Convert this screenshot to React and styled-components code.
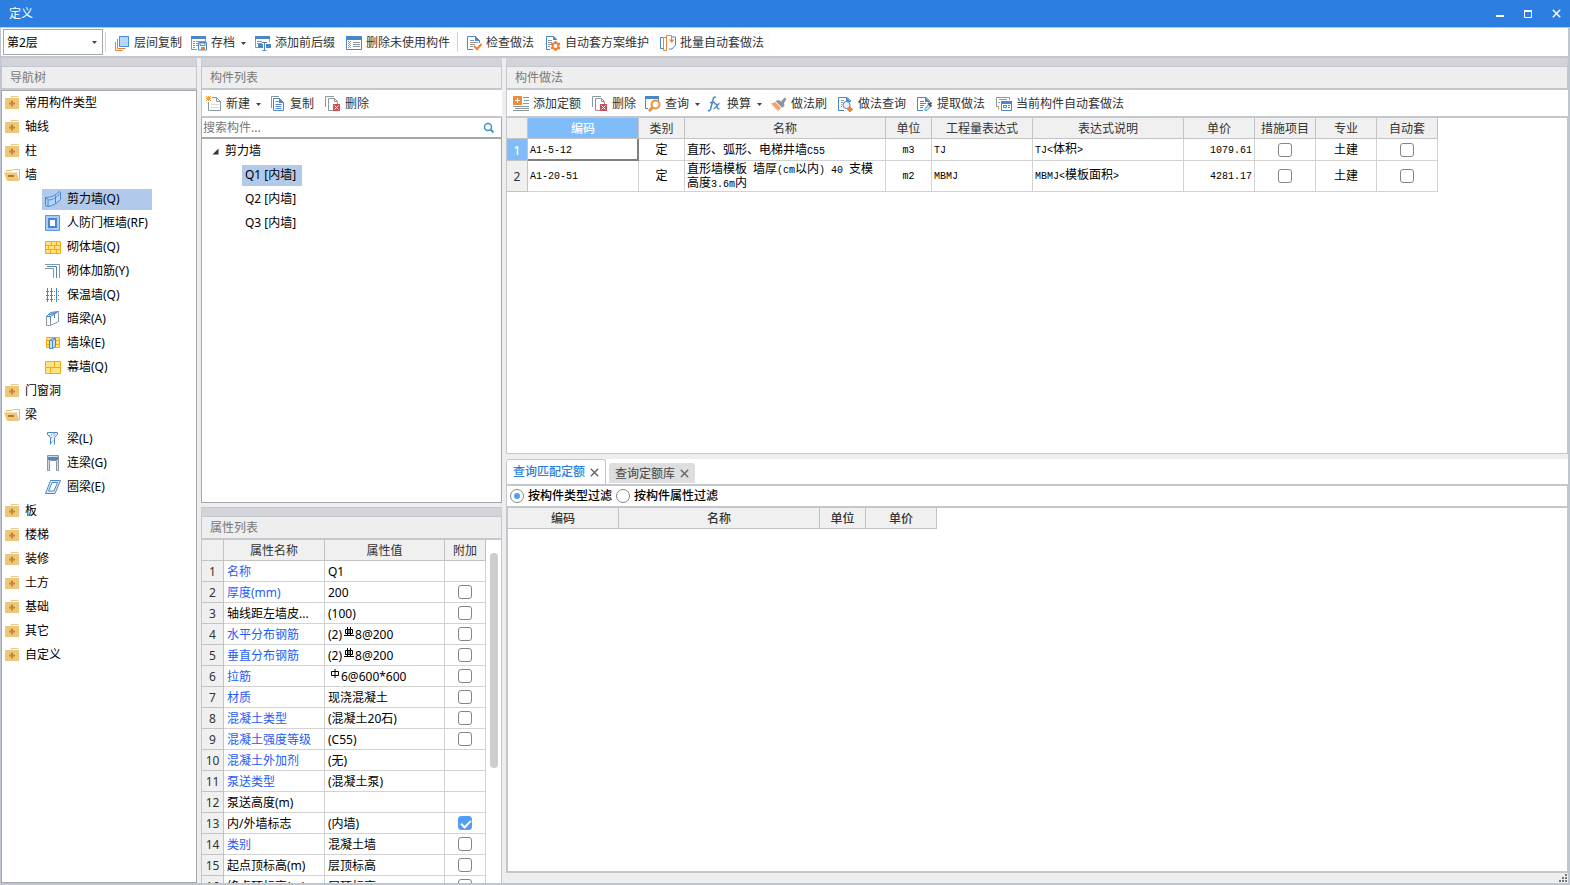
import React from "react";
import styled, { createGlobalStyle, css } from "styled-components";

const color = {
  title: "#2c7ee1",
  frame: "#c0c6d0",
  line: "#c4c8ce",
  strip: "#d3d4da",
  panel: "#eeeeee",
  grid: "#d3d3d3",
  gridHead: "#c3c3c3",
  box: "#a5a8ab",
  pick: "#b1caec",
  blue: "#4a86c8",
  orange: "#f08030",
  slate: "#8a979f",
};

const GlobalStyle = createGlobalStyle`
  * { box-sizing: border-box; }
  body {
    margin: 0;
    background: ${color.panel};
    color: #000;
    font: 12px/16px "Noto Sans", "Noto Sans CJK SC", sans-serif;
  }
  button, input, select { font: inherit; color: inherit; margin: 0; padding: 0; }
  button { background: none; border: 0; cursor: default; white-space: nowrap; }
  svg { display: block; flex: none; }
  ul { list-style: none; margin: 0; padding: 0; }
`;

/* ---------- window frame ---------- */

const Window = styled.div`
  display: flex;
  flex-direction: column;
  height: 100vh;
  overflow: hidden;
`;

const TitleBar = styled.header`
  display: flex;
  align-items: center;
  justify-content: space-between;
  height: 28px;
  padding: 0 5px 0 9px;
  border-bottom: 1px solid #b4cbe8;
  background: ${color.title};
  color: #fff;
`;

const Title = styled.h1`
  margin: 0;
  font-size: 12px;
  font-weight: 400;
`;

const WindowControls = styled.div`
  display: flex;
  gap: 10px;
`;

const WindowButton = styled.button`
  display: grid;
  place-items: center;
  width: 18px;
  height: 18px;
`;

const Frame = styled.div`
  flex: 1;
  min-height: 0;
  display: flex;
  flex-direction: column;
  border: solid ${color.frame};
  border-width: 0 2px 2px 1px;
`;

const MainToolbar = styled.div`
  display: flex;
  align-items: center;
  gap: 2px;
  height: 30px;
  padding: 0 2px;
  border-bottom: 2px solid ${color.line};
  background: #fff;
`;

const Separator = styled.span`
  width: 1px;
  height: 20px;
  margin-right: 2px;
  background: #d0d0d0;
`;

const FloorBox = styled.div`
  display: flex;
  align-items: center;
  position: relative;
  width: 100px;
  height: 26px;
  border: 1px solid ${color.box};

  > svg {
    position: absolute;
    right: 5px;
    pointer-events: none;
  }
`;

const FloorSelect = styled.select`
  width: 100%;
  height: 100%;
  padding: 2px 3px 0;
  border: 0;
  background: #fff;
  appearance: none;
`;

const ToolButton = styled.button`
  display: flex;
  align-items: center;
  gap: 4px;
  height: 21px;
  padding: 1px 4px 0 3px;
  border: 1px solid #fafafa;
  border-radius: 3px;
  color: #333;

  ${(p) =>
    p.$menu &&
    css`
      padding: 1px 2px 0 1px;
      border-color: transparent;
    `}
`;

const ToolText = styled.span`
  padding-top: 1px;
`;

const MenuMark = styled.span`
  padding: 1px 0 0 2px;
`;

const Workspace = styled.div`
  flex: 1;
  min-height: 0;
  display: flex;
  gap: 4px;
`;

const Column = styled.div`
  flex: ${(p) => (p.$width ? `0 0 ${p.$width}px` : "1 1 0")};
  min-width: 0;
  display: flex;
  flex-direction: column;
`;

const Panel = styled.section`
  flex: ${(p) => (p.$height ? `0 1 ${p.$height}px` : "1 1 0")};
  min-height: 0;
  display: flex;
  flex-direction: column;
  margin-top: ${(p) => (p.$spaced ? 4 : 0)}px;
  border-top: ${(p) => (p.$spaced ? `1px solid ${color.line}` : 0)};
`;

const PanelTitle = styled.h2`
  margin: 0;
  height: 32px;
  padding: 2px 8px 0;
  border: solid ${color.line};
  border-width: 0 1px 2px;
  border-top: 8px solid ${color.strip};
  background: ${color.panel};
  box-shadow: inset 0 1px ${color.line};
  color: #777;
  font-size: 12px;
  font-weight: 400;
  line-height: 20px;
`;

const PanelToolbar = styled.div`
  display: flex;
  align-items: center;
  gap: 2px;
  height: 28px;
  padding: 0 2px;
  border: solid ${color.line};
  border-width: 0 0 2px 1px;
  background: #fff;
`;

/* ---------- trees ---------- */

const TreeBox = styled.div`
  flex: 1;
  min-height: 0;
  overflow: hidden;
  border: 1px solid ${color.box};
  background: #fff;
`;

const TreeItem = styled.li`
  display: flex;
  align-items: center;
  height: 24px;
  padding-left: ${(p) => p.$indent}px;
`;

const TreeButton = styled.button`
  display: flex;
  align-items: center;
  gap: ${(p) => (p.$tight ? 5 : 6)}px;
  height: 21px;
  padding: 0 ${(p) => (p.$tight ? 2 : 3)}px;
  background: ${(p) => (p.$picked ? color.pick : "none")};
  min-width: ${(p) => p.$min || 0}px;
`;

const SearchRow = styled.div`
  display: flex;
  align-items: center;
  height: 20px;
  padding: 0 6px 0 1px;
  border: 1px solid ${color.box};
  border-top: 0;
  background: #fff;
`;

const SearchInput = styled.input`
  flex: 1;
  min-width: 0;
  border: 0;
  outline: 0;
  background: none;
  &::placeholder { color: #777; opacity: 1; }
`;

/* ---------- tables ---------- */

const TableBox = styled.div`
  flex: 1;
  min-height: 0;
  display: flex;
  overflow: hidden;
  border: solid ${color.line};
  border-width: 0 1px;
  background: #fff;
`;

const CostBox = styled(TableBox)`
  border-width: 0 1px 1px;
`;

const QueryBox = styled(TableBox)`
  border-width: 0 1px 2px 2px;
`;

const Grid = styled.table`
  align-self: flex-start;
  width: ${(p) => p.$width}px;
  border-collapse: separate;
  border-spacing: 0;
  table-layout: fixed;

  th, td {
    overflow: hidden;
    padding: 0 2px;
    border: solid ${color.grid};
    border-width: 0 1px 1px 0;
    white-space: nowrap;
    text-align: left;
  }
  tr { height: 21px; }
`;

const HeadCell = styled.th`
  && {
    padding: 2px 0 0;
    border-color: ${color.gridHead};
    background: ${(p) => (p.$picked ? "#80bbfa" : "#f0f0f0")};
    color: ${(p) => (p.$picked ? "#fff" : "#333")};
    font-weight: ${(p) => (p.$strong || p.$picked ? 500 : 400)};
    text-align: center;
  }
`;

const PropCell = styled.td`
  && {
    padding: 2px 2px 0 3px;
    color: ${(p) => (p.$key ? "#1f5cf5" : "#000")};
  }
`;

const Symbol = styled.svg`
  display: inline-block;
  vertical-align: 2px;
  margin: 0 1px 0 2px;
`;

const CostRow = styled.tr`
  && { height: ${(p) => p.$height}px; }
`;

const CostCell = styled.td`
  && {
    color: #000;
    line-height: 12px;
    text-align: ${(p) => p.$align || "left"};
    ${(p) =>
      p.$wrap &&
      css`
        padding-top: 2px;
        white-space: normal;
      `}
    ${(p) =>
      p.$focused &&
      css`
        border-color: #808080;
        box-shadow: inset -1px -1px #808080;
      `}
  }
`;

const Latin = styled.span`
  font: 10px/12px "Liberation Mono", monospace;
`;

const CheckBox = styled.input`
  appearance: none;
  display: block;
  width: 14px;
  height: 14px;
  margin: 0 auto;
  border: 1px solid #858585;
  border-radius: 3px;
  background: #fff;

  &:checked {
    border-color: #4f9ef8;
    background: #4f9ef8;
  }
  &:checked::after {
    content: "";
    display: block;
    width: 8px;
    height: 4px;
    margin: 3px 2px;
    border: solid #fff;
    border-width: 0 0 2px 2px;
    transform: rotate(-45deg);
  }
`;

const ScrollTrack = styled.div`
  flex: 1;
  display: flex;
  justify-content: center;
  padding: 13px 0 0 1px;
`;

const ScrollThumb = styled.div`
  width: 8px;
  height: 215px;
  border-radius: 4px;
  background: #cdcdcd;
`;

/* ---------- lower query panel ---------- */

const QuerySpace = styled(Panel)`
  margin-top: 5px;
`;

const TabStrip = styled.div`
  display: flex;
  align-items: flex-end;
  gap: 3px;
  height: 27px;
  border-bottom: 2px solid ${color.line};
  background: #fff;
`;

const Tab = styled.div`
  display: flex;
  align-items: center;
  gap: 5px;
  height: 25px;
  padding: 0 6px;
  border: 1px solid ${color.line};
  border-bottom: 0;
  border-radius: 3px 3px 0 0;
  color: ${color.title};
  font-weight: 500;

  ${(p) =>
    !p.$active &&
    css`
      height: 20px;
      padding: 0 5px;
      margin-bottom: 1px;
      border-color: #dedede;
      background: #dedede;
      color: #444;
      font-weight: 400;
    `}
`;

const TabClose = styled.button`
  display: grid;
  place-items: center;
  height: 16px;
`;

const FilterRow = styled.div`
  display: flex;
  align-items: center;
  gap: 4px;
  height: 22px;
  padding: 0 3px;
  border: solid ${color.line};
  border-width: 0 1px 2px;
  background: #fff;
`;

const RadioLabel = styled.label`
  display: flex;
  align-items: center;
  gap: 4px;
  font-weight: 500;
`;

const Radio = styled.input`
  appearance: none;
  display: grid;
  place-items: center;
  width: 14px;
  height: 14px;
  border: 1px solid #858585;
  border-radius: 50%;
  background: #fff;
  &:checked::after {
    content: "";
    width: 6px;
    height: 6px;
    border-radius: 50%;
    background: #4f9ef8;
  }
`;

const StatusBar = styled.footer`
  display: flex;
  justify-content: flex-end;
  align-items: flex-end;
  height: 10px;
  padding: 0 1px 1px 0;
`;

/* ---------- icons ---------- */

const Icon = ({ children, size = 16, ...rest }) => (
  <svg width={size} height={size} viewBox={`0 0 ${size} ${size}`} fill="none" aria-hidden="true" {...rest}>
    {children}
  </svg>
);

const Caret = () => (
  <svg width="5" height="3" viewBox="0 0 5 3" aria-hidden="true">
    <path d="M0 0h5L2.5 3z" fill="#444" />
  </svg>
);

const Cross = ({ tone = "#666" }) => (
  <svg width="9" height="9" viewBox="0 0 9 9" aria-hidden="true">
    <path d="M.8.8l7.4 7.4M8.2.8L.8 8.2" stroke={tone} strokeWidth="1.4" />
  </svg>
);

const B = color.blue;
const O = color.orange;
const S = color.slate;

const icons = {
  layers: (
    <Icon>
      <rect x="5.5" y="1.5" width="9" height="10" fill="#b9d7fb" stroke="#4a90e0" />
      <path d="M3.500 4v9.500h8M1.500 7v8.500h7" stroke={O} />
    </Icon>
  ),
  archive: (
    <Icon>
      <path d="M0 1h15v3H0z" fill={B} />
      <path d="M.5 4v10.500H6M14.500 4v3M2 6.500h2m1 0h9M2 8.500h2m1 0h2M2 10.500h2m1 0h2M2 12.500h2" stroke={S} />
      <path d="M8 7.500h7.500v7.500h-8V7.500" stroke={B} />
      <path d="M9 8h5v2.500H9z" fill="#fff" stroke={B} />
      <path d="M10 12h4v3h-4z" fill={O} />
    </Icon>
  ),
  affix: (
    <Icon>
      <path d="M0 1h15v3H0z" fill={B} />
      <path d="M.5 4v8.500H3M14.500 4v3M2 6.500h5M2 8.500h5" stroke={S} />
      <path d="M3 9h5v4H3zM11 9h5v4h-5z" fill={B} />
      <path d="M9.500 7.500v8M7 7.500h5M7.500 15.500h4" stroke={B} />
    </Icon>
  ),
  unused: (
    <Icon>
      <path d="M0 1h16v4H0z" fill={B} />
      <path d="M.5 5v9.500h15V5" stroke={B} />
      <path d="M7 7.500h7M7 9.500h7M7 11.500h7" stroke={S} />
      <path d="M2 6h1v1H2zM4 6h1v1H4zM3 7h1v1H3zM2 8h1v1H2zM4 8h1v1H4zM3 9h1v1H3zM2 10h1v1H2zM4 10h1v1H4zM3 11h1v1H3zM2 12h1v1H2zM4 12h1v1H4z" fill={O} />
    </Icon>
  ),
  check: (
    <Icon>
      <path d="M13.500 8V5.500l-4-4h-8v13H7" stroke={B} />
      <path d="M9 1v5h5z" fill={B} />
      <path d="M4 5.500h4M4 7.500h8M4 9.500h5M4 11.500h3" stroke={S} />
      <path d="M8 11l3 3 4.500-5" stroke={O} strokeWidth="2" />
    </Icon>
  ),
  scheme: (
    <Icon>
      <path d="M11.500 5V4l-3-2.500h-7v13H5" stroke={B} />
      <path d="M8 1v4h4z" fill={B} />
      <path d="M3 5.500h4M3 7.500h4M3 9.500h3M3 11.500h2" stroke={S} />
      <circle cx="10.500" cy="11" r="3" stroke={O} strokeWidth="2" />
      <path d="M10.500 6v2M10.500 14v2M6 8.500l2 1M13 12.500l2 1M6 13.500l2-1M13 9.500l2-1" stroke={O} strokeWidth="2" />
    </Icon>
  ),
  batch: (
    <Icon>
      <path d="M3 2.500H.5v11H3M12 2h3.500v8l-3.500 4H9" stroke={B} />
      <path d="M3.500 2.500h3v13h-3zM6.500 13.500V.5h5v5" stroke={O} />
      <path d="M9 4.500h5.500L11.500 8z" fill={O} />
    </Icon>
  ),
  create: (
    <Icon>
      <path d="M6 1.500h4.500l4 4v9h-12V6" stroke={S} />
      <path d="M10.500 1.500v4h4" stroke={S} />
      <path d="M5 8.500h8M5 11.500h8" stroke="#d5dade" />
      <path d="M0 0h1v1H0zM2 0h1v1H2zM4 0h1v1H4zM1 1h3v3H1zM0 2h1v1H0zM4 2h1v1H4zM0 4h1v1H0zM2 4h1v1H2zM4 4h1v1H4z" fill="#f0a040" />
    </Icon>
  ),
  copy: (
    <Icon>
      <path d="M1.500 12V.500H9" stroke={S} />
      <path d="M3.500 2.500h6l4 4v8h-10z" stroke={B} />
      <path d="M9 2v5h5z" fill={B} />
      <path d="M5.500 5.500h3M5.500 8.500h6M5.500 10.500h6M5.500 12.500h6" stroke={B} />
    </Icon>
  ),
  remove: (
    <Icon>
      <path d="M.5 11V.500H9M8 14.500H3.500v-12h6l3 3V8" stroke={S} />
      <path d="M9.500 2.500v3h3" stroke={S} />
      <path d="M8 8h7v7H8z" fill="#cc4a50" />
      <path d="M9.500 9.500l4 4M13.500 9.500l-4 4" stroke="#fff" />
    </Icon>
  ),
  addQuota: (
    <Icon>
      <path d="M0 0h9v9H0z" fill="#ea8d3c" />
      <path d="M2 4.500h5M4.500 2v5" stroke="#fff" />
      <path d="M10 1.500h6M11 4.500h5M10 7.500h6M0 10.500h16M2 12.500h14M0 14.500h16" stroke={S} />
    </Icon>
  ),
  query: (
    <Icon>
      <path d="M0 0h14v3H0z" fill={B} />
      <path d="M.5 3v9.500H3M13.500 3v2" stroke={B} />
      <circle cx="10.500" cy="8.500" r="4" fill="#fff" stroke="#f09038" strokeWidth="2" />
      <path d="M7.500 11.500L4 15" stroke="#f09038" strokeWidth="3" />
    </Icon>
  ),
  fx: (
    <Icon>
      <path d="M1 14.500c2 1 2.500-1 3-3L6 3.500c.4-2 1.500-3 3-2M3 6.500h5" stroke={B} strokeWidth="1.500" />
      <path d="M7 8c2-1 2.500 0 3 2.500s1 3 2.500 2M12.500 7.500C11 7.500 8 12.500 6.500 13" stroke={B} strokeWidth="1.300" />
    </Icon>
  ),
  brush: (
    <Icon>
      <path d="M0 7.500l5-1.500 5.500 5.500L7 15z" fill="#f9a06f" />
      <path d="M4.500 5l3-1 2.500 1.500L13.500 1.500 15.500 3 13 7l.5 3-2.500 2z" fill={S} />
      <path d="M4.500 5.500l6.500 7" stroke="#fff" />
    </Icon>
  ),
  methodQuery: (
    <Icon>
      <path d="M12.500 6V4.500L9 1.500H.5v13H6" stroke={B} />
      <path d="M8 1v5h5z" fill={B} />
      <path d="M3 4.500h3M3 6.500h2M3 8.500h1M3 10.500h1" stroke={S} />
      <circle cx="8.500" cy="9" r="3.500" fill="#eaf3fd" stroke={B} />
      <path d="M12 10.500l1 2 2 1-2 1-1 1.500-1-1.500-2-1 2-1z" fill={O} stroke={O} />
    </Icon>
  ),
  extract: (
    <Icon>
      <path d="M12.500 6V4.500L9 1.500H.5v13H6" stroke={B} />
      <path d="M8 1v5h5z" fill={B} />
      <path d="M3 5.500h4M3 7.500h6M3 9.500h4M3 11.500h3" stroke={B} />
      <path d="M12 8l-4 4.500v2h2l4-4.500" fill="#bfe3ee" stroke="#58a4bd" />
      <path d="M11 7l3.500 3.500M12.500 8.500l2-2" stroke="#556" strokeWidth="2" />
    </Icon>
  ),
  current: (
    <Icon>
      <path d="M3 10.500H.5V1.500h13V4M3 3.500h8M2 6.500h2" stroke={S} />
      <path d="M5 5h11v3H5z" fill={B} />
      <path d="M5.500 6v8.500h10V6" stroke={B} />
      <path d="M7.500 9.500h3v2h-3zM12 9.500h2M12 11.500h2" stroke={B} />
      <path d="M2 12.500h1" stroke={O} strokeWidth="2" />
    </Icon>
  ),
  folder: (
    <Icon>
      <path d="M1 3h6V1.500l1-.5h6l.5 2h.5v11H1z" fill="#eec77c" />
      <path d="M8 2.500h7" stroke="#fff" />
      <path d="M5 8.500h6M8 5.500v6" stroke="#c08a35" strokeWidth="2" />
    </Icon>
  ),
  folderOpen: (
    <Icon>
      <path d="M2.500 5V3.500H8l1-1h6.500V13" stroke="#e6bb68" />
      <path d="M0 5.500h13l2 8.500H3z" fill="#eec77c" />
      <path d="M4 9h6" stroke="#b8791f" strokeWidth="2" />
    </Icon>
  ),
  shearWall: (
    <Icon>
      <path d="M.5 6.500C6 6.500 11 4.500 14 .5l1.500 1v7C12 12.500 8 14.500 3 15.500l-2.500-1z" fill="#b4d5fb" stroke={B} />
      <path d="M3 9c5 0 9-3 12.500-7M.5 6.500l2.500 2v7M10.500 4.500v8" stroke={B} />
    </Icon>
  ),
  doorWall: (
    <Icon>
      <path d="M.5.500h14v15H.5z" fill="#a8ccfa" stroke="#5b95dc" />
      <path d="M4 4h7v8H4z" fill="#fff" stroke="#4a86d0" strokeWidth="2" />
    </Icon>
  ),
  brick: (
    <Icon>
      <path d="M.5 2.500h15v12H.5z" fill="#ffe083" stroke="#f5ab14" />
      <path d="M.5 6.500h15M.5 10.500h15M6.500 2.500v4M11.500 2.500v4M3.500 6.500v4M9.500 6.500v4M5.500 10.500v4M11.500 10.500v4" stroke="#f5ab14" />
    </Icon>
  ),
  rebar: (
    <Icon>
      <path d="M0 1.500h14.500V15M0 5.500h8.500V15" stroke={S} />
      <path d="M2 3.500h9.500V15" stroke={B} />
    </Icon>
  ),
  insulation: (
    <Icon>
      <path d="M2.500 1v14M6.500 1v14M11.500 1v14" stroke={B} />
      <path d="M1 4.500h13M1 8.500h13M1 12.500h13" stroke={B} strokeDasharray="1 1" />
    </Icon>
  ),
  hiddenBeam: (
    <Icon>
      <path d="M1.500 5.500h4v9h-4zM5.500 14.500l8-4v-9" stroke={S} />
      <path d="M1.500 5.500l4-4 8-1-8 5z" fill="#c7defa" stroke={B} />
      <path d="M4 4l7-2.500M5.500 5.500v4M9.500 3v4" stroke={B} />
    </Icon>
  ),
  pier: (
    <Icon>
      <path d="M1.500 2.500h13v10h-13z" fill="#ffe083" stroke="#f5ab14" />
      <path d="M1 5.500h14M1 9.500h14" stroke="#f5ab14" />
      <path d="M4.500 5.500l3-2h3v8l-3 2h-3z" fill="#c7defa" stroke={B} />
      <path d="M4.500 5.500h3v8M7.500 5.500l3-2" stroke={B} />
    </Icon>
  ),
  curtain: (
    <Icon>
      <path d="M.5 2.500h15v12H.5z" fill="#ffe083" stroke="#f5ab14" />
      <path d="M.5 8.500h15M9.500 2.500v6M5.500 8.500v6" stroke="#f5ab14" />
    </Icon>
  ),
  beam: (
    <Icon>
      <path d="M2.500 1.500h10v2l-3 3v7h-4v-7l-3-3z" fill="#edf4fd" />
      <path d="M2.500 4V1.500h10V4M2.500 3.500l3 3v7M12.500 3.500l-3 3v7" stroke={B} />
      <path d="M4 5l6-3M6 7l5-4M6 12l3-3" stroke={B} strokeDasharray="1 1" />
    </Icon>
  ),
  linkBeam: (
    <Icon>
      <path d="M2.500.500h11v15h-2v-10h-7v10h-2z" fill="#d5dade" stroke={S} />
      <path d="M3 2h10v3H3z" fill={B} />
    </Icon>
  ),
  ringBeam: (
    <Icon>
      <path d="M5.500 1.500h10L10 14.500H.5z" fill="#dceafd" stroke={B} />
      <path d="M7 3.500h5.500L9 12H3.500z" fill="#fff" stroke={B} />
    </Icon>
  ),
  search: (
    <Icon size={12}>
      <circle cx="5" cy="5" r="3.500" stroke="#3d94cc" strokeWidth="1.500" />
      <path d="M7.500 7.500L10.500 10.500" stroke="#3d94cc" strokeWidth="2" />
    </Icon>
  ),
  expanded: (
    <Icon size={7}>
      <path d="M6.500.5v6h-6z" fill="#333" />
    </Icon>
  ),
  minimize: (
    <Icon size={10}>
      <path d="M1 7h8" stroke="#fff" strokeWidth="2" />
    </Icon>
  ),
  maximize: (
    <Icon size={10}>
      <path d="M1.500 2v6.500h7V2" stroke="#fff" />
      <path d="M1 2h8" stroke="#fff" strokeWidth="2" />
    </Icon>
  ),
  grip: (
    <Icon size={8}>
      <path d="M6 0h2v2H6zM3 3h2v2H3zM6 3h2v2H6zM0 6h2v2H0zM3 6h2v2H3zM6 6h2v2H6z" fill="#777" />
    </Icon>
  ),
};

/* ---------- data ---------- */

const mainTools = [
  { icon: "layers", label: "层间复制" },
  { icon: "archive", label: "存档", menu: true },
  { icon: "affix", label: "添加前后缀" },
  { icon: "unused", label: "删除未使用构件" },
  "separator",
  { icon: "check", label: "检查做法" },
  { icon: "scheme", label: "自动套方案维护" },
  { icon: "batch", label: "批量自动套做法" },
];

const listTools = [
  { icon: "create", label: "新建", menu: true },
  { icon: "copy", label: "复制" },
  { icon: "remove", label: "删除" },
];

const methodTools = [
  { icon: "addQuota", label: "添加定额" },
  { icon: "remove", label: "删除" },
  { icon: "query", label: "查询", menu: true },
  { icon: "fx", label: "换算", menu: true },
  { icon: "brush", label: "做法刷" },
  { icon: "methodQuery", label: "做法查询" },
  { icon: "extract", label: "提取做法" },
  { icon: "current", label: "当前构件自动套做法" },
];

const navigation = [
  { label: "常用构件类型" },
  { label: "轴线" },
  { label: "柱" },
  {
    label: "墙",
    children: [
      ["shearWall", "剪力墙(Q)"],
      ["doorWall", "人防门框墙(RF)"],
      ["brick", "砌体墙(Q)"],
      ["rebar", "砌体加筋(Y)"],
      ["insulation", "保温墙(Q)"],
      ["hiddenBeam", "暗梁(A)"],
      ["pier", "墙垛(E)"],
      ["curtain", "幕墙(Q)"],
    ],
  },
  { label: "门窗洞" },
  {
    label: "梁",
    children: [
      ["beam", "梁(L)"],
      ["linkBeam", "连梁(G)"],
      ["ringBeam", "圈梁(E)"],
    ],
  },
  { label: "板" },
  { label: "楼梯" },
  { label: "装修" },
  { label: "土方" },
  { label: "基础" },
  { label: "其它" },
  { label: "自定义" },
];

const components = ["Q1 [内墙]", "Q2 [内墙]", "Q3 [内墙]"];

const Ribbed = () => (
  <Symbol width="10" height="10" viewBox="0 0 10 10" fill="none" stroke="#000" aria-hidden="true">
    <path d="M1.500 2.500h7v4h-7zM3.500 0v8M6.500 0v8M0 8.500h10M5 2v4" />
  </Symbol>
);

const Plain = () => (
  <Symbol width="10" height="10" viewBox="0 0 10 10" fill="none" stroke="#000" aria-hidden="true">
    <path d="M1.500 2.500h7v4h-7zM5 0v9" />
  </Symbol>
);

// name, value, highlighted name, tick state (undefined: no box)
const properties = [
  ["名称", "Q1", true],
  ["厚度(mm)", "200", true, false],
  ["轴线距左墙皮...", "(100)", false, false],
  ["水平分布钢筋", <>(2)<Ribbed />8@200</>, true, false],
  ["垂直分布钢筋", <>(2)<Ribbed />8@200</>, true, false],
  ["拉筋", <><Plain />6@600*600</>, true, false],
  ["材质", "现浇混凝土", true, false],
  ["混凝土类型", "(混凝土20石)", true, false],
  ["混凝土强度等级", "(C55)", true, false],
  ["混凝土外加剂", "(无)", true],
  ["泵送类型", "(混凝土泵)", true],
  ["泵送高度(m)", "", false],
  ["内/外墙标志", "(内墙)", false, true],
  ["类别", "混凝土墙", true, false],
  ["起点顶标高(m)", "层顶标高", false, false],
  ["终点顶标高(m)", "层顶标高", false, false],
];

const costColumns = [
  ["", 21],
  ["编码", 111],
  ["类别", 46],
  ["名称", 201],
  ["单位", 46],
  ["工程量表达式", 101],
  ["表达式说明", 151],
  ["单价", 71],
  ["措施项目", 61],
  ["专业", 61],
  ["自动套", 61],
];

const costRows = [
  { height: 22, code: "A1-5-12", kind: "定", name: "直形、弧形、电梯井墙C55", unit: "m3", expr: "TJ", note: "TJ<体积>", price: "1079.61", trade: "土建" },
  { height: 29, code: "A1-20-51", kind: "定", name: "直形墙模板 墙厚(cm以内) 40 支模高度3.6m内", unit: "m2", expr: "MBMJ", note: "MBMJ<模板面积>", price: "4281.17", trade: "土建" },
];

const queryColumns = [
  ["编码", 111],
  ["名称", 201],
  ["单位", 46],
  ["单价", 71],
];

/* ---------- parts ---------- */

const Tools = ({ items }) =>
  items.map((item, i) =>
    item === "separator" ? (
      <Separator key={i} />
    ) : (
      <ToolButton key={item.label} $menu={item.menu} type="button">
        {icons[item.icon]}
        <ToolText>{item.label}</ToolText>
        {item.menu && (
          <MenuMark>
            <Caret />
          </MenuMark>
        )}
      </ToolButton>
    )
  );

// Latin runs take the narrow fixed-width face used by the cost table.
const Mixed = ({ text }) =>
  text.split(/([\x20-\x7e]+)/).map((part, i) => (i % 2 ? <Latin key={i}>{part}</Latin> : part));

const Cols = ({ widths }) => (
  <colgroup>
    {widths.map((w, i) => (
      <col key={i} width={w} />
    ))}
  </colgroup>
);

const sum = (cols) => cols.reduce((total, [, w]) => total + w, 0);

const NavigationPanel = () => (
  <Panel>
    <PanelTitle>导航树</PanelTitle>
    <TreeBox>
      <ul>
        {navigation.map(({ label, children }) => (
          <React.Fragment key={label}>
            <TreeItem $indent={0}>
              <TreeButton type="button" $tight>
                {icons[children ? "folderOpen" : "folder"]}
                {label}
              </TreeButton>
            </TreeItem>
            {children?.map(([icon, name]) => (
              <TreeItem key={name} $indent={40}>
                <TreeButton type="button" $picked={icon === "shearWall"} $min={110}>
                  {icons[icon]}
                  {name}
                </TreeButton>
              </TreeItem>
            ))}
          </React.Fragment>
        ))}
      </ul>
    </TreeBox>
  </Panel>
);

const ComponentPanel = () => (
  <Panel $height={445}>
    <PanelTitle>构件列表</PanelTitle>
    <PanelToolbar>
      <Tools items={listTools} />
    </PanelToolbar>
    <SearchRow>
      <SearchInput type="search" placeholder="搜索构件..." aria-label="搜索构件" />
      {icons.search}
    </SearchRow>
    <TreeBox>
      <ul>
        <TreeItem $indent={7}>
          <TreeButton type="button">
            {icons.expanded}
            剪力墙
          </TreeButton>
        </TreeItem>
        {components.map((name, i) => (
          <TreeItem key={name} $indent={40}>
            <TreeButton type="button" $picked={i === 0} $min={60}>
              {name}
            </TreeButton>
          </TreeItem>
        ))}
      </ul>
    </TreeBox>
  </Panel>
);

const PropertyPanel = () => (
  <Panel $spaced>
    <PanelTitle>属性列表</PanelTitle>
    <TableBox>
      <Grid $width={284}>
        <Cols widths={[22, 101, 120, 41]} />
        <thead>
          <tr>
            {["", "属性名称", "属性值", "附加"].map((t) => (
              <HeadCell key={t}>{t}</HeadCell>
            ))}
          </tr>
        </thead>
        <tbody>
          {properties.map(([name, value, key, ticked], i) => (
            <tr key={name}>
              <HeadCell scope="row">{i + 1}</HeadCell>
              <PropCell $key={key}>{name}</PropCell>
              <PropCell>{value}</PropCell>
              <td>
                {ticked !== undefined && <CheckBox type="checkbox" defaultChecked={ticked} aria-label={name} />}
              </td>
            </tr>
          ))}
        </tbody>
      </Grid>
      <ScrollTrack>
        <ScrollThumb />
      </ScrollTrack>
    </TableBox>
  </Panel>
);

const MethodPanel = () => (
  <Panel $height={396}>
    <PanelTitle>构件做法</PanelTitle>
    <PanelToolbar>
      <Tools items={methodTools} />
    </PanelToolbar>
    <CostBox>
      <Grid $width={sum(costColumns)}>
        <Cols widths={costColumns.map(([, w]) => w)} />
        <thead>
          <tr>
            {costColumns.map(([t]) => (
              <HeadCell key={t} $picked={t === "编码"}>
                {t}
              </HeadCell>
            ))}
          </tr>
        </thead>
        <tbody>
          {costRows.map((row, i) => (
            <CostRow key={row.code} $height={row.height}>
              <HeadCell scope="row" $picked={i === 0}>
                {i + 1}
              </HeadCell>
              <CostCell $focused={i === 0}>
                <Mixed text={row.code} />
              </CostCell>
              <CostCell $align="center">{row.kind}</CostCell>
              <CostCell $wrap>
                <Mixed text={row.name} />
              </CostCell>
              <CostCell $align="center">
                <Mixed text={row.unit} />
              </CostCell>
              <CostCell>
                <Mixed text={row.expr} />
              </CostCell>
              <CostCell>
                <Mixed text={row.note} />
              </CostCell>
              <CostCell $align="right">
                <Mixed text={row.price} />
              </CostCell>
              <CostCell>
                <CheckBox type="checkbox" aria-label="措施项目" />
              </CostCell>
              <CostCell $align="center">{row.trade}</CostCell>
              <CostCell>
                <CheckBox type="checkbox" aria-label="自动套" />
              </CostCell>
            </CostRow>
          ))}
        </tbody>
      </Grid>
    </CostBox>
  </Panel>
);

const QueryPanel = () => (
  <QuerySpace>
    <TabStrip>
      <Tab $active>
        查询匹配定额
        <TabClose type="button" aria-label="关闭">
          <Cross />
        </TabClose>
      </Tab>
      <Tab>
        查询定额库
        <TabClose type="button" aria-label="关闭">
          <Cross />
        </TabClose>
      </Tab>
    </TabStrip>
    <FilterRow>
      <RadioLabel>
        <Radio type="radio" name="filter" defaultChecked />
        按构件类型过滤
      </RadioLabel>
      <RadioLabel>
        <Radio type="radio" name="filter" />
        按构件属性过滤
      </RadioLabel>
    </FilterRow>
    <QueryBox>
      <Grid $width={sum(queryColumns)}>
        <Cols widths={queryColumns.map(([, w]) => w)} />
        <thead>
          <tr>
            {queryColumns.map(([t]) => (
              <HeadCell key={t} $strong>
                {t}
              </HeadCell>
            ))}
          </tr>
        </thead>
      </Grid>
    </QueryBox>
    <StatusBar>{icons.grip}</StatusBar>
  </QuerySpace>
);

export default function App() {
  return (
    <>
      <GlobalStyle />
      <Window>
        <TitleBar>
          <Title>定义</Title>
          <WindowControls>
            <WindowButton type="button" aria-label="最小化">{icons.minimize}</WindowButton>
            <WindowButton type="button" aria-label="最大化">{icons.maximize}</WindowButton>
            <WindowButton type="button" aria-label="关闭">
              <Cross tone="#fff" />
            </WindowButton>
          </WindowControls>
        </TitleBar>
        <Frame>
          <MainToolbar>
            <FloorBox>
              <FloorSelect aria-label="楼层" defaultValue="第2层">
                <option>第2层</option>
              </FloorSelect>
              <Caret />
            </FloorBox>
            <Separator />
            <Tools items={mainTools} />
          </MainToolbar>
          <Workspace>
            <Column $width={196}>
              <NavigationPanel />
            </Column>
            <Column $width={301}>
              <ComponentPanel />
              <PropertyPanel />
            </Column>
            <Column>
              <MethodPanel />
              <QueryPanel />
            </Column>
          </Workspace>
        </Frame>
      </Window>
    </>
  );
}
